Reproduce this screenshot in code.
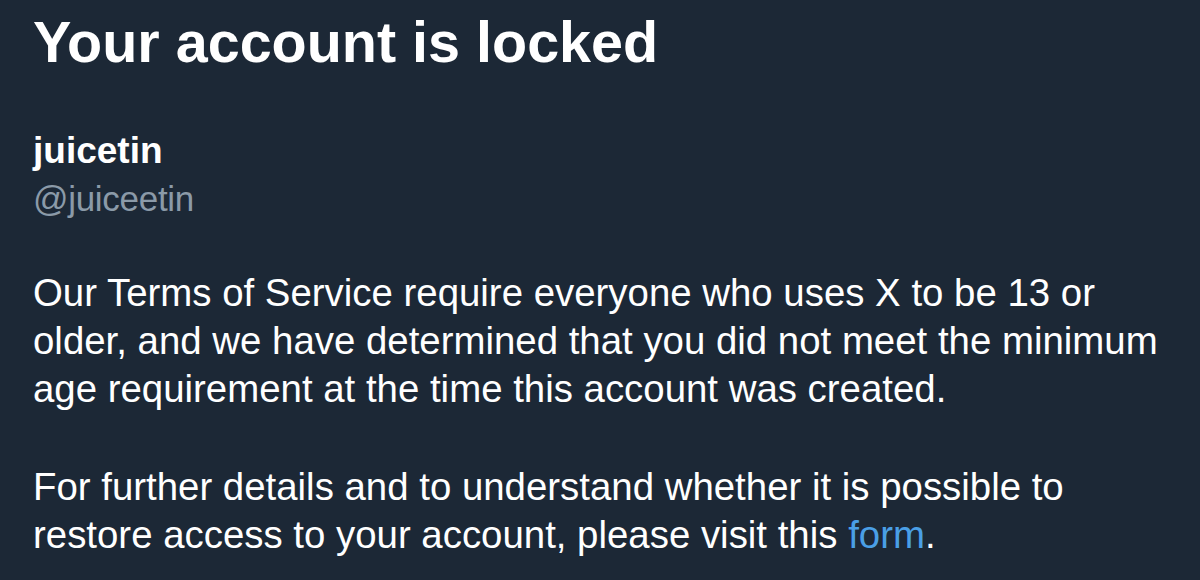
export default function App() {
  return (
    <div className="w-[1200px] h-[580px] overflow-hidden bg-[#1c2836] pl-[33px] pt-[14px] font-['Liberation_Sans',Arial,sans-serif] text-white">
      <h1 className="text-[57.5px] leading-[57.5px] font-bold">Your account is locked</h1>

      <div className="mt-[60px] text-[37px] leading-[37px] font-bold">juicetin</div>
      <div className="mt-[12px] text-[35px] leading-[35px] tracking-[-0.3px] text-[#8b9aa8]">@juiceetin</div>

      <p className="mt-[53px] text-[38.4px] leading-[48px]">
        Our Terms of Service require everyone who uses X to be 13 or
        <br />
        older, and we have determined that you did not meet the minimum
        <br />
        age requirement at the time this account was created.
      </p>

      <p className="mt-[50px] text-[38.4px] leading-[48px]">
        For further details and to understand whether it is possible to
        <br />
        restore access to your account, please visit this{" "}
        <a href="#form" className="text-[#4a9fe6]">
          form
        </a>
        .
      </p>
    </div>
  );
}
